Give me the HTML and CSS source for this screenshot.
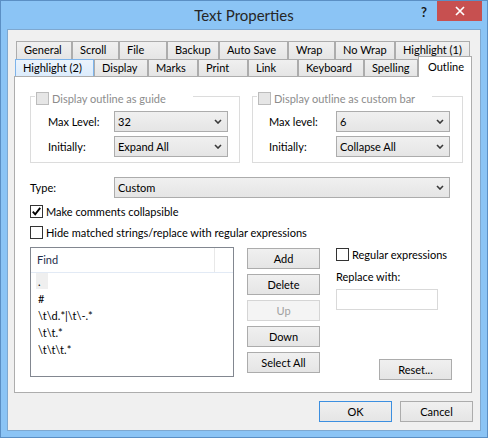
FILE: index.html
```html
<!DOCTYPE html>
<html>
<head>
<meta charset="utf-8">
<title>Text Properties</title>
<link rel="stylesheet" href="styles.css">
</head>
<body>
<div class="window">
  <div class="titlebar">
    <div></div>
    <div class="title">Text Properties</div>
    <div class="caption">
      <span class="help">?</span>
      <span class="close"><svg width="10" height="10" viewBox="0 0 10 10"><path d="M1 1L9 9M9 1L1 9" stroke="#fff" stroke-width="1.7" fill="none"/></svg></span>
    </div>
  </div>
  <div class="client">
    <div class="tabrow row1">
      <div class="tab w56">General</div>
      <div class="tab w47">Scroll</div>
      <div class="tab w48">File</div>
      <div class="tab w52">Backup</div>
      <div class="tab w69">Auto Save</div>
      <div class="tab w47">Wrap</div>
      <div class="tab w60">No Wrap</div>
      <div class="tab w75">Highlight (1)</div>
    </div>
    <div class="tabrow row2">
      <div class="tab hover w79">Highlight (2)</div>
      <div class="tab w54">Display</div>
      <div class="tab w50">Marks</div>
      <div class="tab w50">Print</div>
      <div class="tab w50">Link</div>
      <div class="tab w66">Keyboard</div>
      <div class="tab w54">Spelling</div>
      <div class="tab selected w54">Outline</div>
    </div>
    <div class="page">
      <div class="groups">
        <div class="group g-left">
          <div class="legend l-left"><span class="cb disabled"></span><span>Display outline as guide</span></div>
          <div class="grow first"><span class="lbl">Max Level:</span><div class="select sel-sm"><span>32</span><svg class="chev" width="8" height="5" viewBox="0 0 8 5"><path d="M1 1L4 4L7 1" stroke="#3a3a3a" stroke-width="1.6" fill="none"/></svg></div></div>
          <div class="grow"><span class="lbl">Initially:</span><div class="select sel-sm"><span>Expand All</span><svg class="chev" width="8" height="5" viewBox="0 0 8 5"><path d="M1 1L4 4L7 1" stroke="#3a3a3a" stroke-width="1.6" fill="none"/></svg></div></div>
        </div>
        <div class="group g-right">
          <div class="legend l-right"><span class="cb disabled"></span><span>Display outline as custom bar</span></div>
          <div class="grow first"><span class="lbl">Max level:</span><div class="select sel-sm"><span>6</span><svg class="chev" width="8" height="5" viewBox="0 0 8 5"><path d="M1 1L4 4L7 1" stroke="#3a3a3a" stroke-width="1.6" fill="none"/></svg></div></div>
          <div class="grow"><span class="lbl">Initially:</span><div class="select sel-sm"><span>Collapse All</span><svg class="chev" width="8" height="5" viewBox="0 0 8 5"><path d="M1 1L4 4L7 1" stroke="#3a3a3a" stroke-width="1.6" fill="none"/></svg></div></div>
        </div>
      </div>
      <div class="typerow"><span class="lbl">Type:</span><div class="select sel-lg"><span>Custom</span><svg class="chev" width="8" height="5" viewBox="0 0 8 5"><path d="M1 1L4 4L7 1" stroke="#3a3a3a" stroke-width="1.6" fill="none"/></svg></div></div>
      <div class="chk c1"><span class="cb"><svg width="11" height="11" viewBox="0 0 11 11"><path d="M1.8 5.6L4.2 8.3L9.2 1.8" stroke="#000" stroke-width="1.9" fill="none"/></svg></span><span>Make comments collapsible</span></div>
      <div class="chk c2"><span class="cb"></span><span>Hide matched strings/replace with regular expressions</span></div>
      <div class="lower">
        <div class="list">
          <div class="list-head"><div class="col">Find</div></div>
          <div class="items">
            <div class="item focus">.</div>
            <div class="item">#</div>
            <div class="item">\t\d.*|\t\-.*</div>
            <div class="item">\t\t.*</div>
            <div class="item">\t\t\t.*</div>
          </div>
        </div>
        <div class="btncol">
          <div class="btn">Add</div>
          <div class="btn">Delete</div>
          <div class="btn disabled">Up</div>
          <div class="btn">Down</div>
          <div class="btn">Select All</div>
        </div>
        <div class="rightcol">
          <div class="chk"><span class="cb"></span><span>Regular expressions</span></div>
          <div class="repl-label">Replace with:</div>
          <div class="textbox"></div>
          <div class="btn reset">Reset...</div>
        </div>
      </div>
    </div>
    <div class="footer">
      <div class="btn default">OK</div>
      <div class="btn">Cancel</div>
    </div>
  </div>
</div>
</body>
</html>
```

FILE: styles.css
```css
* { box-sizing: border-box; }
html, body { margin: 0; padding: 0; }
body {
  width: 488px;
  height: 438px;
  overflow: hidden;
  font-family: Lato, "Liberation Sans", sans-serif;
  font-size: 11px;
  color: #000;
}
.window {
  width: 488px;
  height: 438px;
  border: 1px solid #5b8fc4;
  background: #8bc4f5;
  display: flex;
  flex-direction: column;
}
.titlebar {
  height: 28px;
  display: grid;
  grid-template-columns: 1fr auto 1fr;
  align-items: start;
}
.title {
  font-size: 15px;
  line-height: 28px;
  color: #262626;
}
.caption {
  display: flex;
  justify-content: flex-end;
  align-items: flex-start;
}
.help {
  font-weight: bold;
  font-size: 13px;
  line-height: 16px;
  margin-top: 3px;
  margin-right: 10px;
  color: #1a1a1a;
}
.close {
  width: 45px;
  height: 20px;
  margin-right: 5px;
  background: #c75050;
  display: flex;
  align-items: center;
  justify-content: center;
}
.client {
  margin: 0 6px 6px;
  height: 402px;
  border: 1px solid #7ea8d0;
  background: #f0f0f0;
  padding: 11px 8px 0 6px;
}
.tabrow { display: flex; align-items: flex-end; }
.row1 { margin-left: 2px; height: 18px; }
.row2 { margin-left: 1px; height: 17px; }
.tab {
  height: 100%;
  border: 1px solid #acacac;
  border-bottom: none;
  background: linear-gradient(#f0f0f0, #e5e5e5);
  padding-left: 7px;
  line-height: 16px;
  white-space: nowrap;
  flex: none;
}
.row2 .tab { line-height: 15px; }
.tab.hover {
  border-color: #7eb4ea;
  background: linear-gradient(#ecf4fc, #dcecfc);
}
.tab.selected {
  position: relative;
  z-index: 1;
  height: 21px;
  margin-bottom: -1px;
  background: #fff;
  padding-left: 9px;
  line-height: 19px;
}
.w47 { width: 47px; } .w48 { width: 48px; } .w50 { width: 50px; }
.w52 { width: 52px; } .w54 { width: 54px; } .w56 { width: 56px; }
.w60 { width: 60px; } .w66 { width: 66px; } .w69 { width: 69px; }
.w75 { width: 75px; } .w79 { width: 79px; }
.page {
  width: 458px;
  height: 317px;
  border: 1px solid #adadad;
  background: #fff;
  padding-left: 15px;
}
.groups {
  display: flex;
  gap: 12px;
  margin-top: 19px;
}
.group {
  height: 67px;
  border: 1px solid #dcdcdc;
}
.g-left { width: 210px; }
.g-right { width: 211px; }
.legend {
  display: flex;
  align-items: center;
  gap: 3px;
  height: 13px;
  margin-top: -5px;
  margin-left: 4px;
  padding-left: 1px;
  background: #fff;
  color: #8c8c8c;
  white-space: nowrap;
}
.l-left { width: 158px; }
.l-right { width: 175px; }
.grow {
  display: flex;
  align-items: center;
  height: 21px;
  margin-top: 4px;
}
.grow.first { margin-top: 6px; }
.g-left .lbl { margin-left: 17px; width: 66px; }
.g-right .lbl { margin-left: 16px; width: 67px; }
.select {
  height: 21px;
  border: 1px solid #acacac;
  background: linear-gradient(#f0f0f0, #e5e5e5);
  display: flex;
  align-items: center;
  justify-content: space-between;
  padding: 0 5px 0 3px;
}
.sel-sm { width: 114px; }
.sel-lg { width: 336px; }
.typerow {
  display: flex;
  align-items: center;
  height: 21px;
  margin-top: 14px;
}
.typerow .lbl { width: 84px; }
.chk {
  display: flex;
  align-items: center;
  gap: 3px;
  height: 13px;
  white-space: nowrap;
}
.c1 { margin-top: 7px; }
.c2 { margin-top: 8px; }
.cb {
  width: 13px;
  height: 13px;
  flex: none;
  border: 1px solid #333;
  background: #fff;
  display: flex;
  align-items: center;
  justify-content: center;
}
.cb.disabled {
  border-color: #bcbcbc;
  background: #e6e6e6;
}
.lower {
  display: flex;
  align-items: flex-start;
  margin-top: 8px;
}
.list {
  width: 204px;
  height: 130px;
  border: 1px solid #828790;
  background: #fff;
  flex: none;
}
.list-head {
  height: 25px;
  border-bottom: 1px solid #e2eaf5;
  display: flex;
}
.list-head .col {
  width: 184px;
  border-right: 1px solid #e8e8e8;
  padding-left: 6px;
  line-height: 24px;
  color: #1e2d4b;
}
.items { padding-left: 5px; }
.item {
  height: 17px;
  line-height: 17px;
  padding-left: 2px;
  white-space: nowrap;
}
.item.focus {
  width: 12px;
  height: 16px;
  margin-bottom: 1px;
  background: #efefef;
}
.btncol {
  display: flex;
  flex-direction: column;
  gap: 5px;
  margin-left: 13px;
  margin-top: 1px;
}
.btn {
  width: 73px;
  height: 21px;
  border: 1px solid #acacac;
  background: linear-gradient(#f0f0f0, #e5e5e5);
  display: flex;
  align-items: center;
  justify-content: center;
  white-space: nowrap;
}
.btn.disabled {
  background: #f4f4f4;
  border-color: #d5d5d5;
  color: #a0a0a0;
}
.btn.default { border-color: #3c8fe0; }
.rightcol {
  display: flex;
  flex-direction: column;
  margin-left: 16px;
  margin-top: 1px;
}
.repl-label {
  margin-top: 8px;
  line-height: 16px;
}
.textbox {
  width: 102px;
  height: 21px;
  margin-top: 4px;
  border: 1px solid #d9d9d9;
  background: #fff;
}
.reset {
  margin-top: 49px;
  margin-left: 43px;
}
.footer {
  display: flex;
  justify-content: flex-end;
  gap: 8px;
  margin-top: 8px;
  margin-right: -1px;
}
```
